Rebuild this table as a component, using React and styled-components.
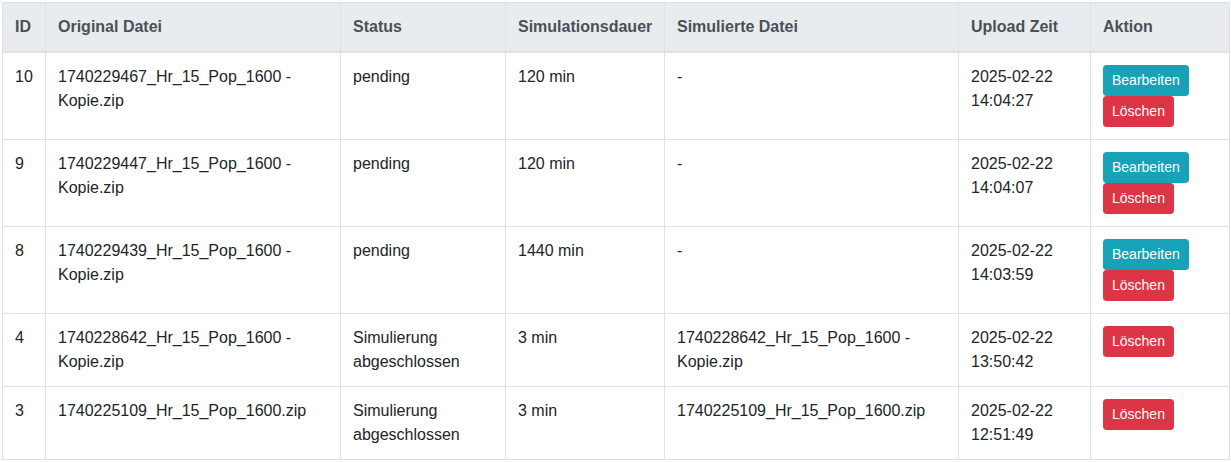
import styled, { createGlobalStyle } from "styled-components"

const GlobalStyle = createGlobalStyle`
    body {
        margin: 0;
        background: #fff;
        font-family: "Liberation Sans", Arial, sans-serif;
        font-size: 16px;
        line-height: 1.5;
        color: #212529;
    }
`

const Wrapper = styled.div`
    padding: 2px;
`

const Table = styled.table`
    width: 1227px;
    border-collapse: collapse;
    table-layout: fixed;
`

const Th = styled.th`
    background-color: #e9ecef;
    color: #495057;
    font-weight: 700;
    text-align: left;
    vertical-align: bottom;
    padding: 12px;
    border: 1px solid #dee2e6;
    border-bottom: 2px solid #dee2e6;
`

const Td = styled.td`
    padding: 12px;
    vertical-align: top;
    border: 1px solid #dee2e6;
`

const Aktionen = styled.div`
    display: flex;
    flex-wrap: wrap;
    align-items: flex-start;
`

const Button = styled.button`
    font-family: "Liberation Sans", Arial, sans-serif;
    font-size: 14px;
    line-height: 1.5;
    padding: 4px 8px;
    border-radius: 3.2px;
    border: 1px solid ${p => p.$color};
    background-color: ${p => p.$color};
    color: #fff;
    cursor: pointer;
`

const spalten = [
    ["ID", 43],
    ["Original Datei", 295],
    ["Status", 165],
    ["Simulationsdauer", 159],
    ["Simulierte Datei", 294],
    ["Upload Zeit", 132],
    ["Aktion", 139],
]

const eintraege = [
    { id: 10, original: "1740229467_Hr_15_Pop_1600 - Kopie.zip", status: "pending", dauer: "120 min", simuliert: "-", zeit: ["2025-02-22", "14:04:27"], bearbeiten: true },
    { id: 9, original: "1740229447_Hr_15_Pop_1600 - Kopie.zip", status: "pending", dauer: "120 min", simuliert: "-", zeit: ["2025-02-22", "14:04:07"], bearbeiten: true },
    { id: 8, original: "1740229439_Hr_15_Pop_1600 - Kopie.zip", status: "pending", dauer: "1440 min", simuliert: "-", zeit: ["2025-02-22", "14:03:59"], bearbeiten: true },
    { id: 4, original: "1740228642_Hr_15_Pop_1600 - Kopie.zip", status: "Simulierung abgeschlossen", dauer: "3 min", simuliert: "1740228642_Hr_15_Pop_1600 - Kopie.zip", zeit: ["2025-02-22", "13:50:42"], bearbeiten: false },
    { id: 3, original: "1740225109_Hr_15_Pop_1600.zip", status: "Simulierung abgeschlossen", dauer: "3 min", simuliert: "1740225109_Hr_15_Pop_1600.zip", zeit: ["2025-02-22", "12:51:49"], bearbeiten: false },
]

export default function App() {
    return (
        <Wrapper>
            <GlobalStyle />
            <Table>
                <colgroup>
                    {spalten.map(([name, breite]) => <col key={name} style={{ width: breite }} />)}
                </colgroup>
                <thead>
                    <tr>
                        {spalten.map(([name]) => <Th key={name}>{name}</Th>)}
                    </tr>
                </thead>
                <tbody>
                    {eintraege.map(e => (
                        <tr key={e.id}>
                            <Td>{e.id}</Td>
                            <Td>{e.original}</Td>
                            <Td>{e.status}</Td>
                            <Td>{e.dauer}</Td>
                            <Td>{e.simuliert}</Td>
                            <Td>{e.zeit[0]}<br />{e.zeit[1]}</Td>
                            <Td>
                                <Aktionen>
                                    {e.bearbeiten && <Button $color="#17a2b8">Bearbeiten</Button>}
                                    <Button $color="#dc3545">Löschen</Button>
                                </Aktionen>
                            </Td>
                        </tr>
                    ))}
                </tbody>
            </Table>
        </Wrapper>
    )
}
